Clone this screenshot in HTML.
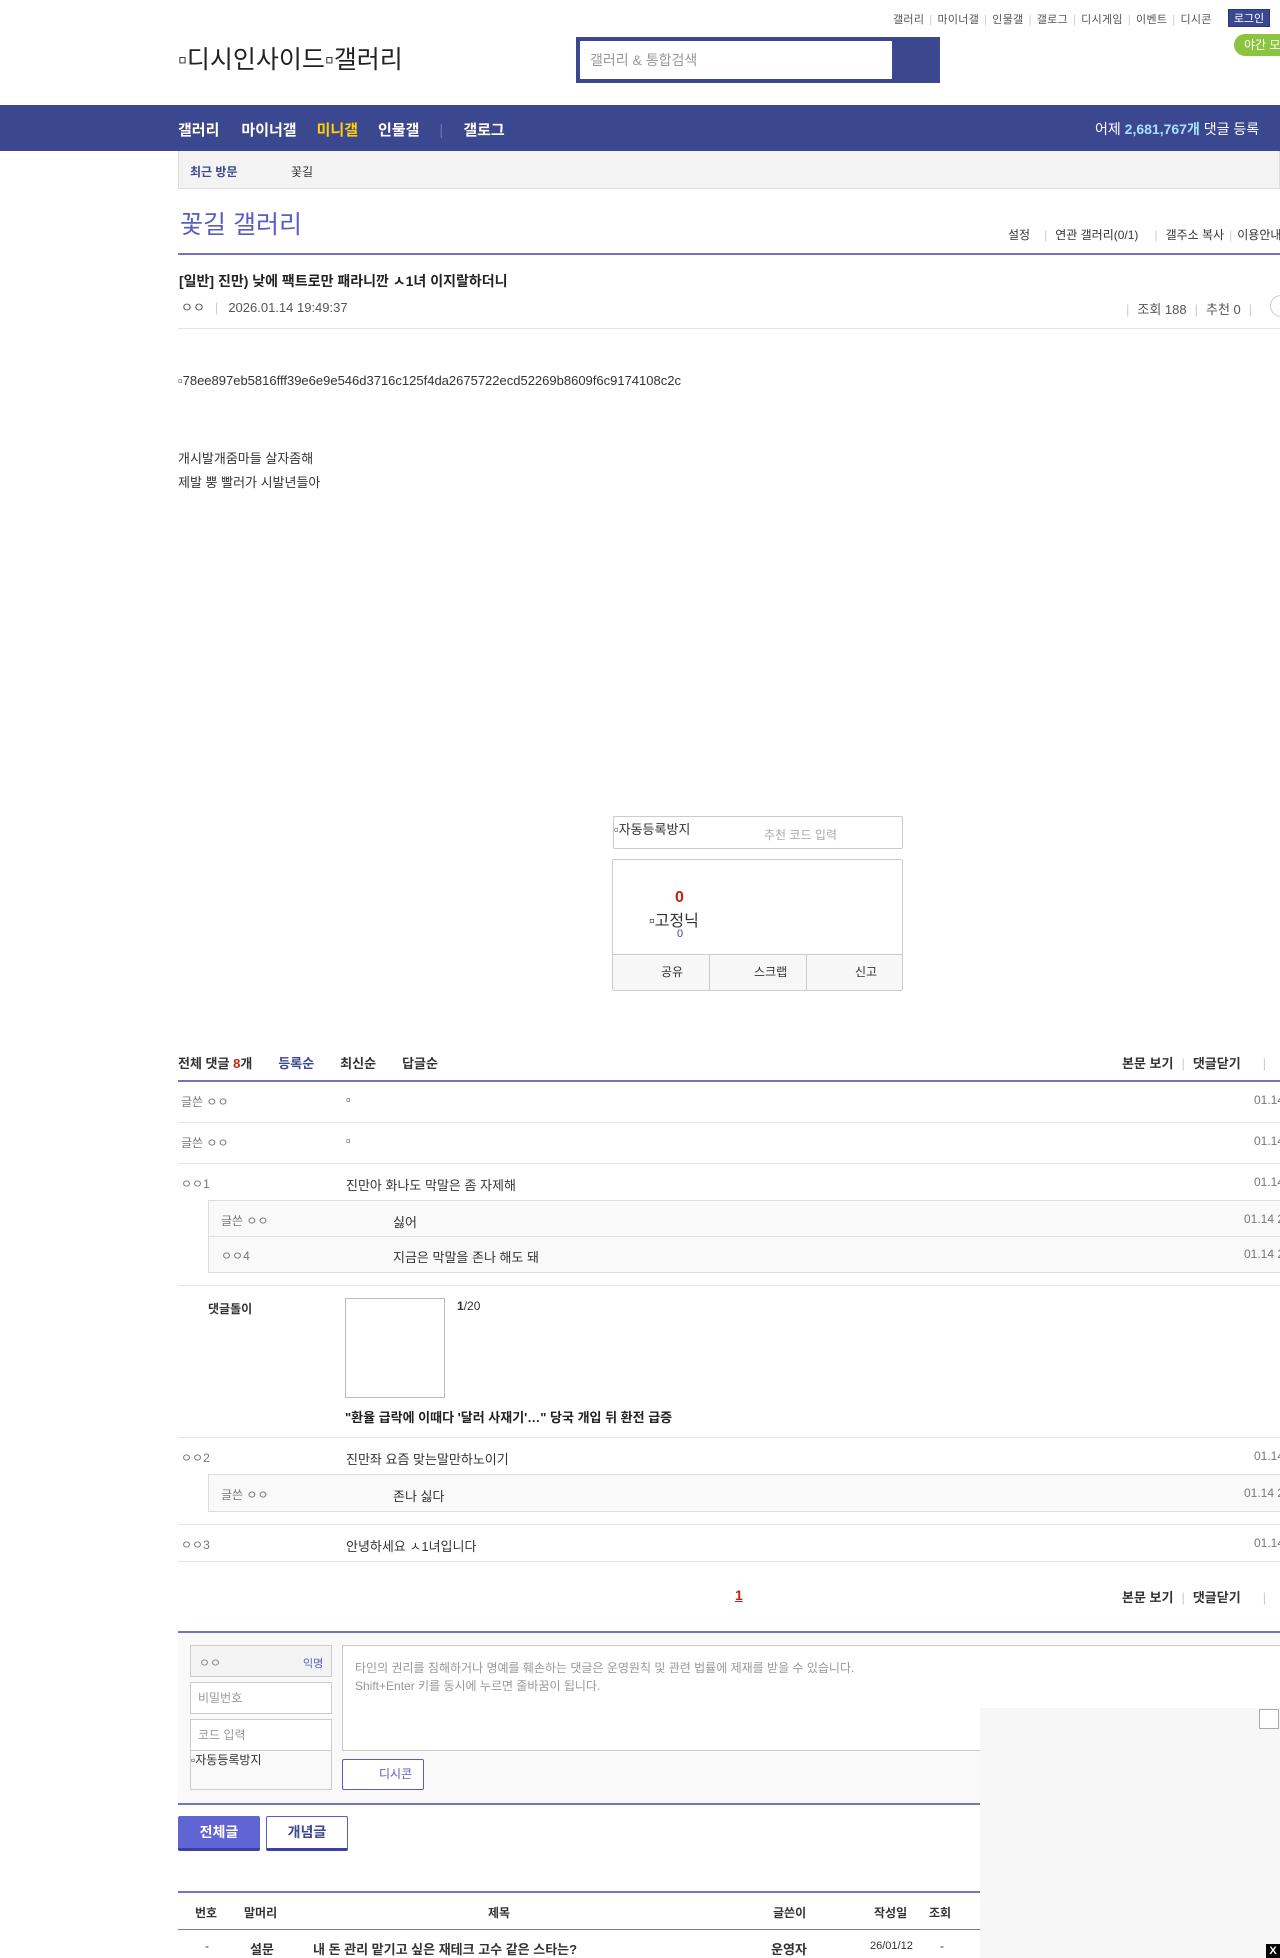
<!DOCTYPE html>
<html><head><meta charset="utf-8"><style>
*{margin:0;padding:0;box-sizing:border-box}
body{width:1280px;height:1958px;overflow:hidden;position:relative;background:#fff;font-family:"Liberation Sans","Noto Sans CJK KR",sans-serif;font-size:13px;color:#333}
.a{position:absolute;white-space:nowrap}
.g{color:#777}
.hr{position:absolute;left:178px;width:1102px;height:1px;background:#e4e4e4}
.sep{color:#ccc;margin:0 5px}
</style></head><body>
<div class="a" style="left:893px;top:11px;font-size:11px;color:#555;letter-spacing:0.3px">갤러리<span class="sep">|</span>마이너갤<span class="sep">|</span>인물갤<span class="sep">|</span>갤로그<span class="sep">|</span>디시게임<span class="sep">|</span>이벤트<span class="sep">|</span>디시콘</div>
<div class="a" style="left:1228px;top:9px;width:42px;height:18px;background:#3b4890;color:#fff;font-size:11px;text-align:center;line-height:18px;border:1px solid #29367c">로그인</div>
<div class="a" style="left:1234px;top:34px;width:60px;height:22px;background:#8bc43f;border-radius:11px;color:#fff;font-size:12px;line-height:22px;padding-left:10px">야간 모드</div>
<div class="a" style="left:178px;top:40px;font-size:25px;color:#222">▫디시인사이드▫갤러리</div>
<div class="a" style="left:576px;top:37px;width:364px;height:46px;background:#3b4890"><div style="position:absolute;left:4px;top:4px;width:312px;height:38px;background:#fff;color:#999;font-size:14px;line-height:38px;padding-left:10px">갤러리 &amp; 통합검색</div></div>
<div class="a" style="left:0;top:105px;width:1280px;height:46px;background:#3b4890"></div>
<div class="a" style="left:178px;top:119px;font-size:15px;font-weight:bold;color:#fff">갤러리<span style="margin-left:22px">마이너갤</span><span style="margin-left:20px;color:#ffd200">미니갤</span><span style="margin-left:20px">인물갤</span><span style="margin-left:20px;color:#6a75b0;font-weight:normal">|</span><span style="margin-left:20px">갤로그</span></div>
<div class="a" style="left:1095px;top:119px;font-size:14px;color:#fff">어제 <b style="color:#a6e1ff">2,681,767개</b> 댓글 등록</div>
<div class="a" style="left:178px;top:151px;width:1102px;height:38px;background:#f3f3f3;border:1px solid #ddd;border-top:none"></div>
<div class="a" style="left:190px;top:163px;font-size:12px;font-weight:bold;color:#3b4890">최근 방문</div>
<div class="a" style="left:291px;top:163px;font-size:12px;color:#333">꽃길</div>
<div class="a" style="left:180px;top:205px;font-size:25px;color:#5a5cc2">꽃길 갤러리</div>
<div class="a" style="left:1008px;top:226px;font-size:12px;color:#333">설정<span class="sep" style="margin:0 8px 0 14px">|</span>연관 갤러리(0/1)<span class="sep" style="margin:0 8px 0 16px">|</span>갤주소 복사<span class="sep">|</span>이용안내</div>
<div class="a" style="left:178px;top:253px;width:1102px;height:2px;background:#7274c0"></div>
<div class="a" style="left:179px;top:271px;font-size:14px;font-weight:bold;color:#222">[일반] 진만) 낮에 팩트로만 패라니깐 ㅅ1녀 이지랄하더니</div>
<div class="a" style="left:181px;top:297px;font-size:13px;color:#555">ㅇㅇ<span class="sep" style="margin:0 10px">|</span>2026.01.14 19:49:37</div>
<div class="a" style="left:1126px;top:299px;font-size:13px;color:#555"><span class="sep" style="margin:0 8px 0 0">|</span>조회 188<span class="sep" style="margin:0 8px">|</span>추천 0<span class="sep" style="margin:0 8px">|</span></div>
<div class="a" style="left:1270px;top:295px;width:24px;height:22px;border:1px solid #ccc;border-radius:11px"></div>
<div class="hr" style="top:328px"></div>
<div class="a" style="left:178px;top:373px;font-size:13px;color:#333">▫78ee897eb5816fff39e6e9e546d3716c125f4da2675722ecd52269b8609f6c9174108c2c</div>
<div class="a" style="left:178px;top:447px;font-size:13px;line-height:24px;color:#333">개시발개줌마들 살자좀해<br>제발 뿡 빨러가 시발년들아</div>
<div class="a" style="left:613px;top:816px;width:290px;height:33px;border:1px solid #ccc;border-radius:2px"><span class="a" style="left:0;top:2px;font-size:13px;color:#333">▫자동등록방지</span><span class="a" style="left:150px;top:9px;font-size:12px;color:#aaa">추천 코드 입력</span></div>
<div class="a" style="left:612px;top:859px;width:291px;height:132px;border:1px solid #ccc;border-radius:2px;background:#fff">
<div class="a" style="left:62px;top:29px;font-size:16px;font-weight:bold;color:#c1240e">0</div>
<div class="a" style="left:36px;top:47px;font-size:16px;color:#333">▫고정닉</div>
<div class="a" style="left:64px;top:68px;font-size:11px;color:#3b4890">0</div>
<div class="a" style="left:0;top:94px;width:289px;height:36px;border-top:1px solid #ccc;background:#f7f7f7;font-size:12px;color:#333">
<span class="a" style="left:0;top:0;width:97px;height:35px;border-right:1px solid #ccc;line-height:35px;padding-left:48px">공유</span>
<span class="a" style="left:97px;top:0;width:97px;height:35px;border-right:1px solid #ccc;line-height:35px;padding-left:44px">스크랩</span>
<span class="a" style="left:194px;top:0;width:95px;height:35px;line-height:35px;padding-left:48px">신고</span></div></div>
<div class="a" style="left:178px;top:1053px;font-size:13px;font-weight:bold;color:#333">전체 댓글 <span style="color:#c1240e">8</span>개<span style="margin-left:26px;color:#3b4890">등록순</span><span style="margin-left:26px">최신순</span><span style="margin-left:26px">답글순</span></div>
<div class="a" style="left:1122px;top:1053px;font-size:13px;font-weight:bold;color:#333">본문 보기<span class="sep" style="margin:0 8px;font-weight:normal">|</span>댓글닫기<span class="sep" style="margin:0 0 0 22px;font-weight:normal">|</span></div>
<div class="a" style="left:178px;top:1080px;width:1102px;height:2px;background:#7274c0"></div>
<div class="a g" style="left:181px;top:1093px;font-size:12px">글쓴 ㅇㅇ</div><div class="a" style="left:346px;top:1092px">▫</div><div class="a g" style="left:1254px;top:1093px;font-size:12px">01.14</div>
<div class="hr" style="top:1122px"></div>
<div class="a g" style="left:181px;top:1134px;font-size:12px">글쓴 ㅇㅇ</div><div class="a" style="left:346px;top:1133px">▫</div><div class="a g" style="left:1254px;top:1134px;font-size:12px">01.14</div>
<div class="hr" style="top:1163px"></div>
<div class="a g" style="left:181px;top:1175px;font-size:12px">ㅇㅇ1</div><div class="a" style="left:346px;top:1175px">진만아 화나도 막말은 좀 자제해</div><div class="a g" style="left:1254px;top:1175px;font-size:12px">01.14</div>
<div class="a" style="left:208px;top:1200px;width:1072px;height:73px;background:#f9f9f9;border:1px solid #ddd;border-right:none"><div style="position:absolute;left:0;top:35px;width:100%;height:1px;background:#ddd"></div></div>
<div class="a g" style="left:221px;top:1212px;font-size:12px">글쓴 ㅇㅇ</div><div class="a" style="left:393px;top:1212px">싫어</div><div class="a g" style="left:1244px;top:1212px;font-size:12px">01.14 2</div>
<div class="a g" style="left:221px;top:1247px;font-size:12px">ㅇㅇ4</div><div class="a" style="left:393px;top:1247px">지금은 막말을 존나 해도 돼</div><div class="a g" style="left:1244px;top:1247px;font-size:12px">01.14 2</div>
<div class="hr" style="top:1285px"></div>
<div class="a" style="left:208px;top:1300px;font-size:12px;font-weight:bold;color:#333">댓글돌이</div>
<div class="a" style="left:345px;top:1298px;width:100px;height:100px;border:1px solid #bbb"></div>
<div class="a" style="left:457px;top:1299px;font-size:12px;color:#333"><b>1</b>/20</div>
<div class="a" style="left:345px;top:1407px;font-size:13px;font-weight:bold;color:#222">"환율 급락에 이때다 '달러 사재기'…" 당국 개입 뒤 환전 급증</div>
<div class="hr" style="top:1437px"></div>
<div class="a g" style="left:181px;top:1449px;font-size:12px">ㅇㅇ2</div><div class="a" style="left:346px;top:1449px">진만좌 요즘 맞는말만하노이기</div><div class="a g" style="left:1254px;top:1449px;font-size:12px">01.14</div>
<div class="a" style="left:208px;top:1474px;width:1072px;height:38px;background:#f9f9f9;border:1px solid #ddd;border-right:none"></div>
<div class="a g" style="left:221px;top:1486px;font-size:12px">글쓴 ㅇㅇ</div><div class="a" style="left:393px;top:1486px">존나 싫다</div><div class="a g" style="left:1244px;top:1486px;font-size:12px">01.14 2</div>
<div class="hr" style="top:1524px"></div>
<div class="a g" style="left:181px;top:1536px;font-size:12px">ㅇㅇ3</div><div class="a" style="left:346px;top:1536px">안녕하세요 ㅅ1녀입니다</div><div class="a g" style="left:1254px;top:1536px;font-size:12px">01.14</div>
<div class="hr" style="top:1561px"></div>
<div class="a" style="left:735px;top:1587px;font-size:14px;font-weight:bold;color:#c1240e;text-decoration:underline">1</div>
<div class="a" style="left:1122px;top:1587px;font-size:13px;font-weight:bold;color:#333">본문 보기<span class="sep" style="margin:0 8px;font-weight:normal">|</span>댓글닫기<span class="sep" style="margin:0 0 0 22px;font-weight:normal">|</span></div>
<div class="a" style="left:178px;top:1631px;width:1102px;height:174px;background:#f9f9f9;border-top:2px solid #7274c0;border-bottom:2px solid #7274c0"></div>
<div class="a" style="left:190px;top:1645px;width:142px;height:32px;background:#f3f3f3;border:1px solid #ccc;font-size:12px"><span class="a" style="left:8px;top:8px;color:#888">ㅇㅇ</span><span class="a" style="left:112px;top:9px;color:#5a5cc2;font-size:11px">익명</span></div>
<div class="a" style="left:190px;top:1682px;width:142px;height:32px;background:#fff;border:1px solid #ccc;font-size:12px;color:#999;line-height:30px;padding-left:7px">비밀번호</div>
<div class="a" style="left:190px;top:1719px;width:142px;height:32px;background:#fff;border:1px solid #ccc;font-size:12px;color:#999;line-height:30px;padding-left:7px">코드 입력</div>
<div class="a" style="left:190px;top:1751px;width:142px;height:39px;background:#f9f9f9;border:1px solid #ccc;border-top:none;font-size:12px;color:#333">▫자동등록방지</div>
<div class="a" style="left:342px;top:1645px;width:950px;height:106px;background:#fff;border:1px solid #ccc;font-size:12px;color:#999;line-height:18px;padding:13px 0 0 12px">타인의 권리를 침해하거나 명예를 훼손하는 댓글은 운영원칙 및 관련 법률에 제재를 받을 수 있습니다.<br>Shift+Enter 키를 동시에 누르면 줄바꿈이 됩니다.</div>
<div class="a" style="left:342px;top:1759px;width:82px;height:31px;background:#fff;border:1px solid #5a5cc2;border-radius:2px;font-size:12px;color:#5a5cc2;line-height:29px;padding-left:36px">디시콘</div>
<div class="a" style="left:178px;top:1816px;width:82px;height:35px;background:#6164d3;border-bottom:3px solid #3b3fa8;border-radius:2px;color:#fff;font-size:14px;font-weight:bold;text-align:center;line-height:32px">전체글</div>
<div class="a" style="left:266px;top:1816px;width:82px;height:35px;background:#fff;border:1px solid #5a5cc2;border-bottom:3px solid #3b3fa8;border-radius:2px;color:#3b4890;font-size:14px;font-weight:bold;text-align:center;line-height:31px">개념글</div>
<div class="a" style="left:178px;top:1891px;width:1102px;height:2px;background:#7274c0"></div>
<div class="a" style="left:195px;top:1904px;font-size:12px;font-weight:bold;color:#333">번호</div>
<div class="a" style="left:244px;top:1904px;font-size:12px;font-weight:bold;color:#333">말머리</div>
<div class="a" style="left:488px;top:1904px;font-size:12px;font-weight:bold;color:#333">제목</div>
<div class="a" style="left:773px;top:1904px;font-size:12px;font-weight:bold;color:#333">글쓴이</div>
<div class="a" style="left:874px;top:1904px;font-size:12px;font-weight:bold;color:#333">작성일</div>
<div class="a" style="left:929px;top:1904px;font-size:12px;font-weight:bold;color:#333">조회</div>
<div class="a" style="left:178px;top:1929px;width:1102px;height:1px;background:#7274c0"></div>
<div class="a" style="left:205px;top:1939px;font-size:12px;color:#333">-</div>
<div class="a" style="left:250px;top:1939px;font-size:13px;font-weight:bold;color:#333">설문</div>
<div class="a" style="left:313px;top:1939px;font-size:13px;font-weight:bold;color:#333">내 돈 관리 맡기고 싶은 재테크 고수 같은 스타는?</div>
<div class="a" style="left:771px;top:1939px;font-size:13px;font-weight:bold;color:#333">운영자</div>
<div class="a" style="left:870px;top:1940px;font-size:11px;color:#333">26/01/12</div>
<div class="a" style="left:940px;top:1939px;font-size:12px;color:#333">-</div>
<div class="a" style="left:980px;top:1708px;width:300px;height:250px;background:#f7f7f7"></div>
<div class="a" style="left:1259px;top:1709px;width:20px;height:20px;border:1px solid #aaa;background:#fff"></div>
<div class="a" style="left:1266px;top:1944px;width:14px;height:14px;background:#000;color:#fff;font-size:11px;font-weight:bold;text-align:center;line-height:14px">X</div>
</body></html>
